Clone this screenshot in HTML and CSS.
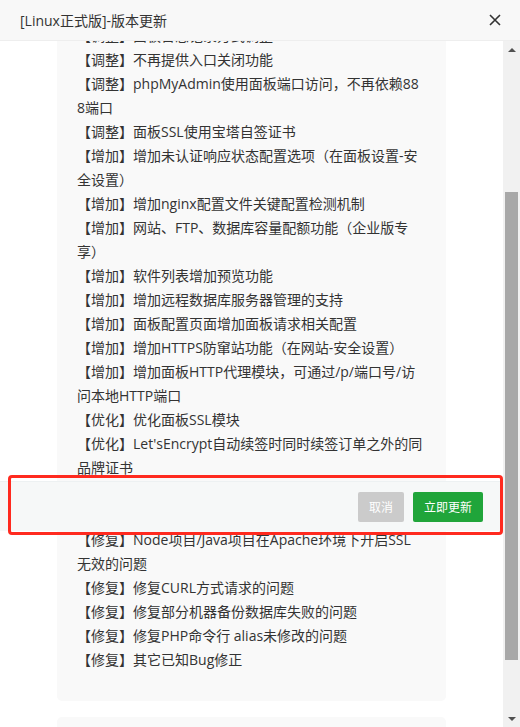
FILE: index.html
```html
<!DOCTYPE html>
<html lang="zh-CN">
<head>
    <meta charset="UTF-8">
    <meta name="viewport" content="width=device-width, initial-scale=1.0">
    <title>版本更新</title>
    <link rel="stylesheet" href="styles.css">
</head>
<body>
    <div class="layer">
        <div class="layer-title">
            <span>[Linux正式版]-版本更新</span>
            <button class="layer-close" aria-label="关闭">
                <svg width="12" height="12" viewBox="0 0 12 12">
                    <path d="M1 1L11 11M11 1L1 11" stroke="#333" stroke-width="1.6" fill="none"/>
                </svg>
            </button>
        </div>

        <div class="layer-body">
            <div class="log-view">
                <div class="log-card">
                    <div class="log-item">【调整】面板默认不再开启BasicAuth认证</div>
                    <div class="log-item">【调整】面板登录页面样式调整</div>
                    <div class="log-item">【调整】安全入口错误时默认返回404状态码</div>
                    <div class="log-item">【调整】面板日志记录方式调整</div>
                    <div class="log-item">【调整】不再提供入口关闭功能</div>
                    <div class="log-item">【调整】phpMyAdmin使用面板端口访问，不再依赖888端口</div>
                    <div class="log-item">【调整】面板SSL使用宝塔自签证书</div>
                    <div class="log-item">【增加】增加未认证响应状态配置选项（在面板设置-安全设置）</div>
                    <div class="log-item">【增加】增加nginx配置文件关键配置检测机制</div>
                    <div class="log-item">【增加】网站、FTP、数据库容量配额功能（企业版专享）</div>
                    <div class="log-item">【增加】软件列表增加预览功能</div>
                    <div class="log-item">【增加】增加远程数据库服务器管理的支持</div>
                    <div class="log-item">【增加】面板配置页面增加面板请求相关配置</div>
                    <div class="log-item">【增加】增加HTTPS防窜站功能（在网站-安全设置）</div>
                    <div class="log-item">【增加】增加面板HTTP代理模块，可通过/p/端口号/访问本地HTTP端口</div>
                    <div class="log-item">【优化】优化面板SSL模块</div>
                    <div class="log-item">【优化】Let'sEncrypt自动续签时同时续签订单之外的同品牌证书</div>
                    <div class="log-item">【优化】优化文件管理器大文件上传速度</div>
                    <div class="log-item">【修复】修复部分情况下面板无法启动的问题</div>
                    <div class="log-item">【修复】Node项目/Java项目在Apache环境下开启SSL无效的问题</div>
                    <div class="log-item">【修复】修复CURL方式请求的问题</div>
                    <div class="log-item">【修复】修复部分机器备份数据库失败的问题</div>
                    <div class="log-item">【修复】修复PHP命令行 alias未修改的问题</div>
                    <div class="log-item">【修复】其它已知Bug修正</div>
                </div>
                <div class="log-card log-card-next"></div>
            </div>

            <div class="scrollbar">
                <div class="sb-btn"><span class="sb-arrow-up"></span></div>
                <div class="sb-track">
                    <div class="sb-thumb" style="margin-top: 134px; height: 468px;"></div>
                </div>
                <div class="sb-btn"><span class="sb-arrow-down"></span></div>
            </div>

            <div class="submit-bar">
                <button class="btn btn-cancel">取消</button>
                <button class="btn btn-success">立即更新</button>
            </div>
            <div class="mark-box"></div>
        </div>
    </div>
</body>
</html>
```

FILE: styles.css
```css
body {
    margin: 0;
    padding: 0;
    background-color: #fff;
    color: #333;
    font-family: "Open Sans", "Noto Sans CJK SC", sans-serif;
}

.layer {
    width: 520px;
    height: 727px;
    overflow: hidden;
}

.layer-title {
    height: 40px;
    padding: 0 0 0 20px;
    background-color: #f8f8f8;
    border-bottom: 1px solid #eee;
    font-size: 14px;
    color: #333;
    display: flex;
    align-items: center;
    justify-content: space-between;
}

.layer-close {
    width: 40px;
    height: 40px;
    margin-right: 5px;
    padding: 0;
    border: none;
    background: none;
    display: flex;
    align-items: center;
    justify-content: center;
    cursor: pointer;
}

.layer-body {
    position: relative;
    display: flex;
    height: 686px;
    overflow: hidden;
}

.log-view {
    flex: 1;
    overflow: hidden;
}

.log-card {
    width: 389px;
    box-sizing: border-box;
    margin: -104px auto 16px;
    padding: 15px 23px 29px 20px;
    background-color: #f9f9f9;
    border-radius: 5px;
    font-size: 14px;
    line-height: 24px;
    color: #333;
    word-break: break-all;
}

.log-card-next {
    margin-top: 0;
    height: 200px;
}

.scrollbar {
    width: 17px;
    flex-shrink: 0;
    background-color: #f1f1f1;
    display: flex;
    flex-direction: column;
}

.sb-btn {
    height: 17px;
    display: flex;
    align-items: center;
    justify-content: center;
}

.sb-arrow-up {
    border-left: 4px solid transparent;
    border-right: 4px solid transparent;
    border-bottom: 4px solid #505050;
}

.sb-arrow-down {
    border-left: 4px solid transparent;
    border-right: 4px solid transparent;
    border-top: 4px solid #505050;
}

.sb-track {
    flex: 1;
}

.sb-thumb {
    margin-left: 2px;
    margin-right: 2px;
    background-color: #a8a8a8;
}

.submit-bar {
    position: absolute;
    left: 0;
    top: 440px;
    width: 503px;
    height: 50px;
    box-sizing: border-box;
    padding-right: 20px;
    background-color: #f6f8f8;
    border-top: 1px solid #edf1f2;
    display: flex;
    align-items: center;
    justify-content: flex-end;
    gap: 9px;
}

.btn {
    height: 30px;
    padding: 0 11px;
    border: none;
    border-radius: 2px;
    color: #fff;
    font-family: "Open Sans", "Noto Sans CJK SC", sans-serif;
    font-size: 12px;
    cursor: pointer;
}

.btn-cancel {
    background-color: #cbcbcb;
}

.btn-success {
    background-color: #20a53a;
}

.mark-box {
    position: absolute;
    left: 8px;
    top: 434px;
    width: 495px;
    height: 60px;
    box-sizing: border-box;
    border: 3px solid #ff2a1f;
    border-radius: 4px;
}
```
